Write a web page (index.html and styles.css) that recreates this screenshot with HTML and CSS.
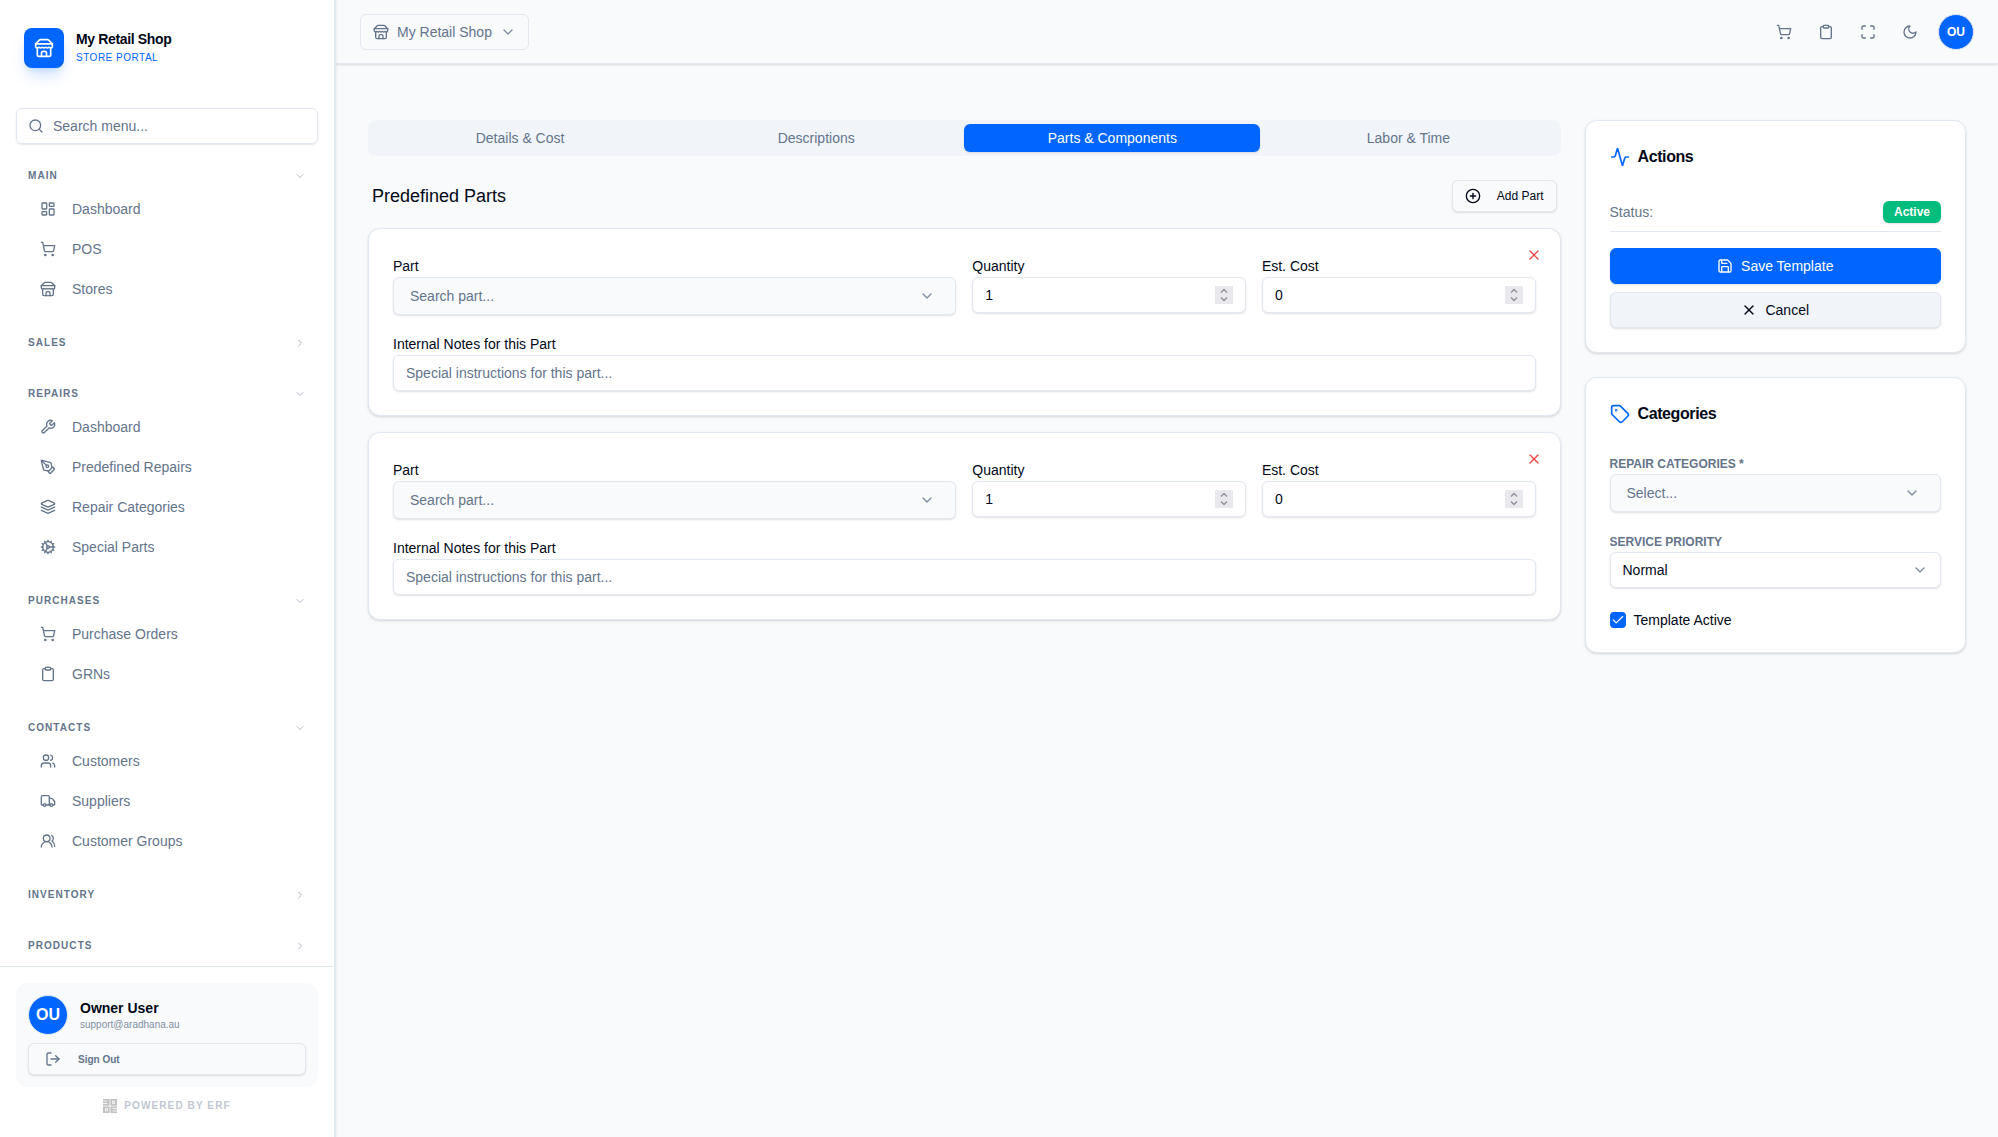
FILE: index.html
```html
<!DOCTYPE html>
<html lang="en">
  <head>
    <meta charset="UTF-8">
    <meta name="viewport" content="width=device-width, initial-scale=1.0">
    <title>My Retail Shop - Store Portal</title>
    <link rel="stylesheet" href="styles.css">
  </head>
  <body>
    <!-- icon sprite -->
    <svg class="sprite" xmlns="http://www.w3.org/2000/svg">
      <symbol id="i-store" viewBox="0 0 24 24"><path d="m2 7 4.41-4.41A2 2 0 0 1 7.83 2h8.34a2 2 0 0 1 1.42.59L22 7"/><path d="M4 12v8a2 2 0 0 0 2 2h12a2 2 0 0 0 2-2v-8"/><path d="M15 22v-4a2 2 0 0 0-2-2h-2a2 2 0 0 0-2 2v4"/><path d="M2 7h20"/><path d="M22 7v3a2 2 0 0 1-2 2a2.7 2.7 0 0 1-1.59-.63.7.7 0 0 0-.82 0A2.7 2.7 0 0 1 16 12a2.7 2.7 0 0 1-1.59-.63.7.7 0 0 0-.82 0A2.7 2.7 0 0 1 12 12a2.7 2.7 0 0 1-1.59-.63.7.7 0 0 0-.82 0A2.7 2.7 0 0 1 8 12a2.7 2.7 0 0 1-1.59-.63.7.7 0 0 0-.82 0A2.7 2.7 0 0 1 4 12a2 2 0 0 1-2-2V7"/></symbol>
      <symbol id="i-search" viewBox="0 0 24 24"><circle cx="11" cy="11" r="8"/><path d="m21 21-4.3-4.3"/></symbol>
      <symbol id="i-down" viewBox="0 0 24 24"><path d="m6 9 6 6 6-6"/></symbol>
      <symbol id="i-right" viewBox="0 0 24 24"><path d="m9 18 6-6-6-6"/></symbol>
      <symbol id="i-dashboard" viewBox="0 0 24 24"><rect width="7" height="9" x="3" y="3" rx="1"/><rect width="7" height="5" x="14" y="3" rx="1"/><rect width="7" height="9" x="14" y="12" rx="1"/><rect width="7" height="5" x="3" y="16" rx="1"/></symbol>
      <symbol id="i-cart" viewBox="0 0 24 24"><circle cx="8" cy="21" r="1"/><circle cx="19" cy="21" r="1"/><path d="M2.05 2.05h2l2.66 12.42a2 2 0 0 0 2 1.58h9.78a2 2 0 0 0 1.95-1.57l1.65-7.43H5.12"/></symbol>
      <symbol id="i-wrench" viewBox="0 0 24 24"><path d="M14.7 6.3a1 1 0 0 0 0 1.4l1.6 1.6a1 1 0 0 0 1.4 0l3.77-3.77a6 6 0 0 1-7.94 7.94l-6.91 6.91a2.12 2.12 0 0 1-3-3l6.91-6.91a6 6 0 0 1 7.94-7.94l-3.76 3.76z"/></symbol>
      <symbol id="i-pen" viewBox="0 0 24 24"><path d="M15.707 21.293a1 1 0 0 1-1.414 0l-1.586-1.586a1 1 0 0 1 0-1.414l5.586-5.586a1 1 0 0 1 1.414 0l1.586 1.586a1 1 0 0 1 0 1.414z"/><path d="m18 13-1.375-6.874a1 1 0 0 0-.746-.776L3.235 2.028a1 1 0 0 0-1.207 1.207L5.35 15.879a1 1 0 0 0 .776.746L13 18"/><path d="m2.3 2.3 7.286 7.286"/><circle cx="11" cy="11" r="2"/></symbol>
      <symbol id="i-layers" viewBox="0 0 24 24"><path d="m12.83 2.18a2 2 0 0 0-1.66 0L2.6 6.08a1 1 0 0 0 0 1.83l8.58 3.91a2 2 0 0 0 1.66 0l8.58-3.9a1 1 0 0 0 0-1.83Z"/><path d="m22 12.18-9.17 4.16a2 2 0 0 1-1.66 0L2 12.18"/><path d="m22 17.18-9.17 4.16a2 2 0 0 1-1.66 0L2 17.18"/></symbol>
      <symbol id="i-cog" viewBox="0 0 24 24"><path d="M12 20a8 8 0 1 0 0-16 8 8 0 0 0 0 16Z"/><path d="M12 14a2 2 0 1 0 0-4 2 2 0 0 0 0 4Z"/><path d="M12 2v2"/><path d="M12 22v-2"/><path d="m17 20.66-1-1.73"/><path d="M11 10.27 7 3.34"/><path d="m20.66 17-1.73-1"/><path d="m3.34 7 1.73 1"/><path d="M14 12h8"/><path d="M2 12h2"/><path d="m20.66 7-1.73 1"/><path d="m3.34 17 1.73-1"/><path d="m17 3.34-1 1.73"/><path d="m11 13.73-4 6.93"/></symbol>
      <symbol id="i-clipboard" viewBox="0 0 24 24"><rect width="8" height="4" x="8" y="2" rx="1"/><path d="M16 4h2a2 2 0 0 1 2 2v14a2 2 0 0 1-2 2H6a2 2 0 0 1-2-2V6a2 2 0 0 1 2-2h2"/></symbol>
      <symbol id="i-users" viewBox="0 0 24 24"><path d="M16 21v-2a4 4 0 0 0-4-4H6a4 4 0 0 0-4 4v2"/><circle cx="9" cy="7" r="4"/><path d="M22 21v-2a4 4 0 0 0-3-3.87"/><path d="M16 3.13a4 4 0 0 1 0 7.75"/></symbol>
      <symbol id="i-truck" viewBox="0 0 24 24"><path d="M14 18V6a2 2 0 0 0-2-2H4a2 2 0 0 0-2 2v11a1 1 0 0 0 1 1h2"/><path d="M15 18H9"/><path d="M19 18h2a1 1 0 0 0 1-1v-3.65a1 1 0 0 0-.22-.624l-3.48-4.35A1 1 0 0 0 17.52 8H14"/><circle cx="17" cy="18" r="2"/><circle cx="7" cy="18" r="2"/></symbol>
      <symbol id="i-groups" viewBox="0 0 24 24"><path d="M18 21a8 8 0 0 0-16 0"/><circle cx="10" cy="8" r="5"/><path d="M22 20c0-3.37-2-6.5-4-8a5 5 0 0 0-.45-8.3"/></symbol>
      <symbol id="i-logout" viewBox="0 0 24 24"><path d="M9 21H5a2 2 0 0 1-2-2V5a2 2 0 0 1 2-2h4"/><path d="m16 17 5-5-5-5"/><path d="M21 12H9"/></symbol>
      <symbol id="i-expand" viewBox="0 0 24 24"><path d="M8 3H5a2 2 0 0 0-2 2v3"/><path d="M21 8V5a2 2 0 0 0-2-2h-3"/><path d="M3 16v3a2 2 0 0 0 2 2h3"/><path d="M16 21h3a2 2 0 0 0 2-2v-3"/></symbol>
      <symbol id="i-moon" viewBox="0 0 24 24"><path d="M12 3a6 6 0 0 0 9 9 9 9 0 1 1-9-9Z"/></symbol>
      <symbol id="i-plus" viewBox="0 0 24 24"><circle cx="12" cy="12" r="10"/><path d="M8 12h8"/><path d="M12 8v8"/></symbol>
      <symbol id="i-x" viewBox="0 0 24 24"><path d="M18 6 6 18"/><path d="m6 6 12 12"/></symbol>
      <symbol id="i-activity" viewBox="0 0 24 24"><path d="M22 12h-2.48a2 2 0 0 0-1.93 1.46l-2.35 8.36a.25.25 0 0 1-.48 0L9.24 2.18a.25.25 0 0 0-.48 0l-2.35 8.36A2 2 0 0 1 4.49 12H2"/></symbol>
      <symbol id="i-save" viewBox="0 0 24 24"><path d="M15.2 3a2 2 0 0 1 1.4.6l3.8 3.8a2 2 0 0 1 .6 1.4V19a2 2 0 0 1-2 2H5a2 2 0 0 1-2-2V5a2 2 0 0 1 2-2z"/><path d="M17 21v-7a1 1 0 0 0-1-1H8a1 1 0 0 0-1 1v7"/><path d="M7 3v4a1 1 0 0 0 1 1h7"/></symbol>
      <symbol id="i-tag" viewBox="0 0 24 24"><path d="M12.586 2.586A2 2 0 0 0 11.172 2H4a2 2 0 0 0-2 2v7.172a2 2 0 0 0 .586 1.414l8.704 8.704a2.426 2.426 0 0 0 3.42 0l6.58-6.58a2.426 2.426 0 0 0 0-3.42z"/><circle cx="7.5" cy="7.5" r=".5"/></symbol>
      <symbol id="i-check" viewBox="0 0 24 24"><path d="M20 6 9 17l-5-5"/></symbol>
      <symbol id="i-spin" viewBox="0 0 18 18"><path d="M6 6.5l3-3 3 3"/><path d="M6 11.5l3 3 3-3"/></symbol>
      <symbol id="i-erf" viewBox="0 0 14 14"><path d="M0 2h4.5M0 4.5h4.5M7 0v14M0 7h14"/><path d="M9.5 2h2v2.5h-2z"/><path d="M2.5 9.5h2V12h-2z"/><path d="M14 9.5H9.5M14 12H9.5"/></symbol>
    </svg>

    <div class="app">
      <aside class="sidebar">
        <div class="brand">
          <div class="brand-logo"><svg class="icon icon-lg"><use href="#i-store"/></svg></div>
          <div>
            <div class="brand-name">My Retail Shop</div>
            <div class="brand-sub">STORE PORTAL</div>
          </div>
        </div>
        <div class="search-box">
          <svg class="icon"><use href="#i-search"/></svg>
          <input type="text" class="search-input" placeholder="Search menu...">
        </div>

        <nav class="menu">
          <div class="menu-group">
            <div class="menu-label">MAIN<svg class="icon icon-xs"><use href="#i-down"/></svg></div>
            <a class="menu-item"><svg class="icon"><use href="#i-dashboard"/></svg>Dashboard</a>
            <a class="menu-item"><svg class="icon"><use href="#i-cart"/></svg>POS</a>
            <a class="menu-item"><svg class="icon"><use href="#i-store"/></svg>Stores</a>
          </div>
          <div class="menu-group">
            <div class="menu-label">SALES<svg class="icon icon-xs"><use href="#i-right"/></svg></div>
          </div>
          <div class="menu-group">
            <div class="menu-label">REPAIRS<svg class="icon icon-xs"><use href="#i-down"/></svg></div>
            <a class="menu-item"><svg class="icon"><use href="#i-wrench"/></svg>Dashboard</a>
            <a class="menu-item"><svg class="icon"><use href="#i-pen"/></svg>Predefined Repairs</a>
            <a class="menu-item"><svg class="icon"><use href="#i-layers"/></svg>Repair Categories</a>
            <a class="menu-item"><svg class="icon"><use href="#i-cog"/></svg>Special Parts</a>
          </div>
          <div class="menu-group">
            <div class="menu-label">PURCHASES<svg class="icon icon-xs"><use href="#i-down"/></svg></div>
            <a class="menu-item"><svg class="icon"><use href="#i-cart"/></svg>Purchase Orders</a>
            <a class="menu-item"><svg class="icon"><use href="#i-clipboard"/></svg>GRNs</a>
          </div>
          <div class="menu-group">
            <div class="menu-label">CONTACTS<svg class="icon icon-xs"><use href="#i-down"/></svg></div>
            <a class="menu-item"><svg class="icon"><use href="#i-users"/></svg>Customers</a>
            <a class="menu-item"><svg class="icon"><use href="#i-truck"/></svg>Suppliers</a>
            <a class="menu-item"><svg class="icon"><use href="#i-groups"/></svg>Customer Groups</a>
          </div>
          <div class="menu-group">
            <div class="menu-label">INVENTORY<svg class="icon icon-xs"><use href="#i-right"/></svg></div>
          </div>
          <div class="menu-group">
            <div class="menu-label">PRODUCTS<svg class="icon icon-xs"><use href="#i-right"/></svg></div>
          </div>
        </nav>

        <div class="sidebar-footer">
          <div class="user-card">
            <div class="user-row">
              <div class="avatar avatar-lg">OU</div>
              <div>
                <div class="user-name">Owner User</div>
                <div class="user-mail">support@aradhana.au</div>
              </div>
            </div>
            <button type="button" class="signout"><svg class="icon"><use href="#i-logout"/></svg>Sign Out</button>
          </div>
          <div class="powered"><svg class="icon-erf"><use href="#i-erf"/></svg>POWERED BY ERF</div>
        </div>
      </aside>

      <div class="content">
        <header class="topbar">
          <button type="button" class="shop-select">
            <svg class="icon"><use href="#i-store"/></svg>My Retail Shop<svg class="icon chev"><use href="#i-down"/></svg>
          </button>
          <div class="topbar-actions">
            <svg class="icon"><use href="#i-cart"/></svg>
            <svg class="icon"><use href="#i-clipboard"/></svg>
            <svg class="icon"><use href="#i-expand"/></svg>
            <svg class="icon"><use href="#i-moon"/></svg>
            <div class="avatar">OU</div>
          </div>
        </header>

        <main class="page">
          <section class="parts">
            <div class="tabs">
              <a class="tab">Details &amp; Cost</a>
              <a class="tab">Descriptions</a>
              <a class="tab tab-active">Parts &amp; Components</a>
              <a class="tab">Labor &amp; Time</a>
            </div>
            <div class="parts-head">
              <h3 class="parts-title">Predefined Parts</h3>
              <button type="button" class="btn-add"><svg class="icon"><use href="#i-plus"/></svg>Add Part</button>
            </div>

            <div class="card part-card">
              <button type="button" class="remove"><svg class="icon"><use href="#i-x"/></svg></button>
              <div class="part-grid">
                <div class="field field-wide">
                  <label>Part</label>
                  <div class="combo">Search part...<svg class="icon chev"><use href="#i-down"/></svg></div>
                </div>
                <div class="field">
                  <label>Quantity</label>
                  <div class="number"><input type="text" class="number-input" value="1"><svg class="spinner"><use href="#i-spin"/></svg></div>
                </div>
                <div class="field">
                  <label>Est. Cost</label>
                  <div class="number"><input type="text" class="number-input" value="0"><svg class="spinner"><use href="#i-spin"/></svg></div>
                </div>
              </div>
              <div class="field">
                <label>Internal Notes for this Part</label>
                <input type="text" class="text-input" placeholder="Special instructions for this part...">
              </div>
            </div>

            <div class="card part-card">
              <button type="button" class="remove"><svg class="icon"><use href="#i-x"/></svg></button>
              <div class="part-grid">
                <div class="field field-wide">
                  <label>Part</label>
                  <div class="combo">Search part...<svg class="icon chev"><use href="#i-down"/></svg></div>
                </div>
                <div class="field">
                  <label>Quantity</label>
                  <div class="number"><input type="text" class="number-input" value="1"><svg class="spinner"><use href="#i-spin"/></svg></div>
                </div>
                <div class="field">
                  <label>Est. Cost</label>
                  <div class="number"><input type="text" class="number-input" value="0"><svg class="spinner"><use href="#i-spin"/></svg></div>
                </div>
              </div>
              <div class="field">
                <label>Internal Notes for this Part</label>
                <input type="text" class="text-input" placeholder="Special instructions for this part...">
              </div>
            </div>
          </section>

          <section class="side">
            <div class="card side-card">
              <h4 class="card-title"><svg class="icon icon-lg"><use href="#i-activity"/></svg>Actions</h4>
              <div class="status"><span>Status:</span><span class="badge">Active</span></div>
              <button type="button" class="btn btn-primary"><svg class="icon"><use href="#i-save"/></svg>Save Template</button>
              <button type="button" class="btn btn-secondary"><svg class="icon"><use href="#i-x"/></svg>Cancel</button>
            </div>

            <div class="card side-card">
              <h4 class="card-title"><svg class="icon icon-lg"><use href="#i-tag"/></svg>Categories</h4>
              <div class="field field-caps">
                <label>REPAIR CATEGORIES *</label>
                <div class="combo">Select...<svg class="icon chev"><use href="#i-down"/></svg></div>
              </div>
              <div class="field field-caps">
                <label>SERVICE PRIORITY</label>
                <div class="select">Normal<svg class="icon chev"><use href="#i-down"/></svg></div>
              </div>
              <div class="check-row"><span class="checkbox"><svg class="icon"><use href="#i-check"/></svg></span>Template Active</div>
            </div>
          </section>
        </main>
      </div>
    </div>
  </body>
</html>
```
FILE: styles.css
```css
* { box-sizing: border-box; }
html, body { margin: 0; height: 100%; }
body { background-color: #f8fafc; color: #020817; font-family: "Liberation Sans", Arial, sans-serif; font-size: 14px; line-height: 20px; overflow: hidden; }
h3, h4 { margin: 0; }
input, button { font-family: inherit; font-size: 14px; color: inherit; margin: 0; }
input::placeholder { color: #64748b; opacity: 1; }
.sprite { display: none; }
.icon { width: 16px; height: 16px; flex-shrink: 0; fill: none; stroke: currentColor; stroke-width: 2; stroke-linecap: round; stroke-linejoin: round; }
.icon-lg { width: 20px; height: 20px; }
.icon-xs { width: 12px; height: 12px; opacity: 0.5; }
.chev { opacity: 0.8; }

.app { display: flex; height: 100%; }

/* sidebar */
.sidebar { display: flex; flex-direction: column; flex-shrink: 0; width: 336px; height: 100%; background-color: white; border-right: 2px solid #e2e8f0; box-shadow: 1px 0 2px rgba(0, 0, 0, 0.06); z-index: 2; }
.brand { display: flex; align-items: center; gap: 12px; padding: 28px 24px 0; height: 68px; }
.brand-logo { display: flex; align-items: center; justify-content: center; width: 40px; height: 40px; border-radius: 8px; background-color: #0066ff; color: white; box-shadow: 0 10px 15px -3px rgba(0, 102, 255, 0.2), 0 4px 6px -4px rgba(0, 102, 255, 0.2); }
.brand-name { margin-top: -2px; padding-bottom: 2px; font-weight: bold; line-height: 18px; letter-spacing: -0.35px; }
.brand-sub { color: #0066ff; font-size: 10px; line-height: 15px; letter-spacing: 0.5px; }
.search-box { display: flex; align-items: center; gap: 9px; height: 36px; margin: 40px 16px 16px; padding: 0 11px; border: 1px solid #e2e8f0; border-radius: 6px; color: #64748b; box-shadow: 0 1px 2px rgba(0, 0, 0, 0.1); }
.search-input { flex: 1; min-width: 0; padding: 0; border: none; outline: none; background: none; }
.menu { flex: 1; min-height: 0; overflow: hidden; }
.menu-group { display: flex; flex-direction: column; margin-bottom: 20px; }
.menu-label { display: flex; align-items: center; justify-content: space-between; height: 31px; padding: 0 28px; color: #64748b; font-size: 10px; font-weight: bold; letter-spacing: 1.05px; }
.menu-item { display: flex; align-items: center; gap: 16px; height: 36px; padding-left: 40px; color: #64748b; }
.menu-item + .menu-item { margin-top: 4px; }
.sidebar-footer { height: 171px; padding: 16px; border-top: 1px solid #e2e8f0; }
.user-card { height: 104px; padding: 12px; border-radius: 12px; background-color: #f8fafc; }
.user-row { display: flex; align-items: center; gap: 12px; height: 40px; margin-bottom: 8px; }
.user-name { font-weight: bold; line-height: 18px; }
.user-mail { color: #64748b; font-size: 10px; line-height: 15px; opacity: 0.8; }
.avatar { display: flex; align-items: center; justify-content: center; width: 36px; height: 36px; border: 1px solid #e2e8f0; border-radius: 50%; background-color: #0066ff; color: white; font-size: 12px; font-weight: bold; }
.avatar-lg { width: 40px; height: 40px; font-size: 16px; }
.signout { display: flex; align-items: center; gap: 17px; width: 100%; height: 32px; padding: 0 16px; border: 1px solid #e2e8f0; border-radius: 6px; background-color: #f8fafc; color: #64748b; font-size: 10px; font-weight: bold; box-shadow: 0 1px 2px rgba(0, 0, 0, 0.12); }
.powered { display: flex; align-items: center; justify-content: center; gap: 7px; margin-top: 11px; color: #64748b; font-size: 10px; line-height: 16px; font-weight: bold; letter-spacing: 1.1px; opacity: 0.4; }
.icon-erf { width: 14px; height: 14px; background-color: #666; fill: none; stroke: white; stroke-width: 0.8; }

/* top bar */
.content { flex: 1; min-width: 0; }
.topbar { display: flex; align-items: center; justify-content: space-between; height: 64px; padding: 0 24px; border-bottom: 1px solid #e2e8f0; box-shadow: 0 1px 2px rgba(0, 0, 0, 0.12); }
.shop-select { display: flex; align-items: center; gap: 8px; height: 36px; padding: 0 12px; border: 1px solid #e2e8f0; border-radius: 6px; background-color: #f8fafc; color: #64748b; }
.topbar-actions { display: flex; align-items: center; gap: 26px; color: #64748b; }
.topbar-actions .avatar { margin-left: -6px; }

/* page */
.page { display: grid; grid-template-columns: repeat(4, 1fr); gap: 24px; align-items: start; padding: 56px 32px; }
.parts { grid-column: span 3; }
.card { border: 1px solid #e2e8f0; border-radius: 12px; background-color: white; box-shadow: 0 1px 3px rgba(0, 0, 0, 0.1), 0 1px 2px rgba(0, 0, 0, 0.06); }
.tabs { display: grid; grid-template-columns: repeat(4, 1fr); height: 36px; padding: 4px; border-radius: 8px; background-color: #f1f5f9; }
.tab { display: flex; align-items: center; justify-content: center; border-radius: 6px; color: #64748b; }
.tab-active { background-color: #0066ff; color: white; box-shadow: 0 1px 2px rgba(0, 0, 0, 0.12); }
.parts-head { display: flex; align-items: center; justify-content: space-between; margin: 24px 0 16px; padding: 0 4px; }
.parts-title { font-size: 18px; line-height: 28px; font-weight: normal; }
.btn-add { display: flex; align-items: center; gap: 16px; height: 32px; padding: 0 12px; border: 1px solid #e2e8f0; border-radius: 6px; background-color: #f8fafc; font-size: 12px; box-shadow: 0 1px 2px rgba(0, 0, 0, 0.12); }
.part-card { position: relative; height: 188px; margin-bottom: 16px; padding: 28px 24px 24px; }
.remove { position: absolute; top: 18px; right: 18px; display: flex; padding: 0; border: none; background: none; color: #ef4444; }
.part-grid { display: grid; grid-template-columns: repeat(4, 1fr); gap: 16px; height: 58px; margin-bottom: 20px; }
.field-wide { grid-column: span 2; }
.field label { display: block; line-height: 18px; padding-bottom: 2px; }
.text-input, .number, .select { display: flex; align-items: center; width: 100%; height: 36px; padding: 0 12px; border: 1px solid #e2e8f0; border-radius: 6px; background-color: white; box-shadow: 0 1px 2px rgba(0, 0, 0, 0.12); }
.number-input { flex: 1; min-width: 0; padding: 0; border: none; outline: none; }
.spinner { width: 18px; height: 18px; background-color: #e9e9ed; fill: none; stroke: #8f8f9d; stroke-width: 1.4; }
.combo { display: flex; align-items: center; justify-content: space-between; height: 38px; padding: 0 20px 0 16px; border: 1px solid #e2e8f0; border-radius: 6px; background-color: #f8fafc; color: #64748b; box-shadow: 0 1px 2px rgba(0, 0, 0, 0.12); }
.select { justify-content: space-between; }
.select .chev { color: #64748b; }

/* right column */
.side { display: flex; flex-direction: column; gap: 24px; }
.side-card { padding: 24px; }
.card-title { display: flex; align-items: center; gap: 8px; height: 24px; margin-bottom: 32px; font-size: 16px; letter-spacing: -0.4px; }
.card-title .icon { color: #0066ff; }
.status { display: flex; align-items: center; justify-content: space-between; height: 31px; margin-bottom: 16px; padding-bottom: 8px; border-bottom: 1px solid #e2e8f0; color: #64748b; }
.badge { padding: 0 11px; border-radius: 6px; background-color: #00bc7d; color: white; font-size: 12px; line-height: 22px; font-weight: bold; box-shadow: 0 1px 2px rgba(0, 0, 0, 0.12); }
.btn { display: flex; align-items: center; justify-content: center; gap: 8px; width: 100%; height: 36px; padding: 0; border: 1px solid #e2e8f0; border-radius: 6px; box-shadow: 0 1px 2px rgba(0, 0, 0, 0.12); }
.btn-primary { border-color: #0066ff; background-color: #0066ff; color: white; }
.btn-secondary { margin-top: 8px; background-color: #f1f5f9; }
.field-caps { margin-bottom: 24px; }
.field-caps label { color: #64748b; font-size: 12px; font-weight: bold; line-height: 12px; padding-bottom: 4px; }
.check-row { display: flex; align-items: center; gap: 8px; height: 16px; }
.checkbox { display: flex; align-items: center; justify-content: center; width: 16px; height: 16px; border-radius: 4px; background-color: #0066ff; color: white; }
.checkbox .icon { width: 14px; height: 14px; }
```
